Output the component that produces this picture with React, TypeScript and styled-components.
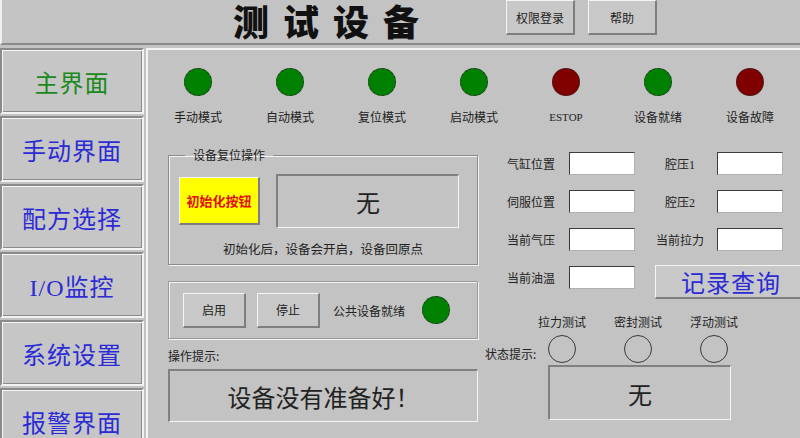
import React from "react";
import styled, { createGlobalStyle, css } from "styled-components";

const GlobalStyle = createGlobalStyle`
  html, body {
    margin: 0;
    padding: 0;
    background: #c3c3c3;
    overflow: hidden;
  }
  body {
    font-family: "Noto Sans CJK SC", "Liberation Sans", sans-serif;
    color: #222;
  }
`;

const raised = css`
  border-style: solid;
  border-width: 1px 2px 2px 1px;
  border-color: #f4f4f4 #7e7e7e #7e7e7e #f4f4f4;
`;

const sunken = css`
  border-style: solid;
  border-width: 2px 1px 1px 2px;
  border-color: #808080 #f4f4f4 #f4f4f4 #808080;
`;

const indicators = [
  { label: "手动模式", color: "green" },
  { label: "自动模式", color: "green" },
  { label: "复位模式", color: "green" },
  { label: "启动模式", color: "green" },
  { label: "ESTOP", color: "red" },
  { label: "设备就绪", color: "green" },
  { label: "设备故障", color: "red" },
];

const navItems = ["主界面", "手动界面", "配方选择", "I/O监控", "系统设置", "报警界面"];

const fields = [
  ["气缸位置", "腔压1"],
  ["伺服位置", "腔压2"],
  ["当前气压", "当前拉力"],
];

const tests = ["拉力测试", "密封测试", "浮动测试"];

const App = () => {
  return (
    <Screen>
      <GlobalStyle />
      <Header>
        <Title>测试设备</Title>
        <HeaderButton>权限登录</HeaderButton>
        <HeaderButton>帮助</HeaderButton>
      </Header>
      <Body>
        <Nav>
          {navItems.map((item, i) => (
            <NavButton key={item} $active={i === 0}>
              {item}
            </NavButton>
          ))}
        </Nav>
        <MainPanel>
          <IndicatorRow>
            {indicators.map((item) => (
              <Indicator key={item.label}>
                <Lamp $color={item.color} />
                <SmallLabel $latin={item.label === "ESTOP"}>{item.label}</SmallLabel>
              </Indicator>
            ))}
          </IndicatorRow>
          <Content>
            <LeftColumn>
              <GroupBox>
                <Legend>设备复位操作</Legend>
                <ResetRow>
                  <InitButton>初始化按钮</InitButton>
                  <ValueBox $w={183} $h={54}>无</ValueBox>
                </ResetRow>
                <Caption>初始化后，设备会开启，设备回原点</Caption>
              </GroupBox>
              <ControlBox>
                <PlainButton>启用</PlainButton>
                <PlainButton>停止</PlainButton>
                <ControlLabel>公共设备就绪</ControlLabel>
                <Lamp $color="green" />
              </ControlBox>
              <HintLabel>操作提示:</HintLabel>
              <ValueBox $w={310} $h={53}>设备没有准备好！</ValueBox>
            </LeftColumn>
            <RightColumn>
              <FieldGrid>
                {fields.map(([a, b]) => (
                  <React.Fragment key={a}>
                    <FieldLabel>{a}</FieldLabel>
                    <FieldInput />
                    <FieldLabel $center>{b}</FieldLabel>
                    <FieldInput />
                  </React.Fragment>
                ))}
                <FieldLabel>当前油温</FieldLabel>
                <FieldInput />
                <RecordButton>记录查询</RecordButton>
              </FieldGrid>
              <TestGrid>
                <span />
                {tests.map((t) => (
                  <SmallLabel key={t}>{t}</SmallLabel>
                ))}
                <StatusLabel>状态提示:</StatusLabel>
                {tests.map((t) => (
                  <EmptyLamp key={t} />
                ))}
              </TestGrid>
              <StatusBox $w={183} $h={55}>无</StatusBox>
            </RightColumn>
          </Content>
        </MainPanel>
      </Body>
    </Screen>
  );
};

export default App;

const Screen = styled.div`
  width: 800px;
  height: 438px;
  overflow: hidden;
  background: #c3c3c3;
`;

const Header = styled.div`
  height: 43px;
  display: flex;
  align-items: flex-start;
  border-left: 2px solid #f0f0f0;
  border-bottom: 2px solid #8a8a8a;
  box-sizing: content-box;
`;

const Title = styled.div`
  margin-left: 231px;
  margin-right: 73px;
  margin-top: 1px;
  font-size: 36px;
  line-height: 38px;
  font-weight: 900;
  letter-spacing: 14px;
  color: #111;
  white-space: nowrap;
`;

const HeaderButton = styled.div`
  ${raised};
  width: 66px;
  height: 32px;
  margin-right: 13px;
  background: #c8c8c8;
  display: flex;
  align-items: center;
  justify-content: center;
  font-size: 12px;
  color: #222;
`;

const Body = styled.div`
  margin-top: 3px;
  display: grid;
  grid-template-columns: 144px 1fr;
  column-gap: 2px;
  height: 390px;
`;

const Nav = styled.div`
  display: flex;
  flex-direction: column;
  gap: 2px;
`;

const NavButton = styled.div<{ $active?: boolean }>`
  flex: 0 0 auto;
  height: 62px;
  border: 2px solid;
  border-color: #8a8a8a #f2f2f2 #f2f2f2 #8a8a8a;
  box-shadow: inset 1px 1px 0 #f6f6f6, inset -1px -1px 0 #8a8a8a;
  background: #c6c6c6;
  display: flex;
  align-items: center;
  justify-content: center;
  font-family: "Liberation Serif", "Noto Sans CJK SC", serif;
  font-size: 24px;
  letter-spacing: 1px;
  color: ${(p) => (p.$active ? "#1b8a1b" : "#2b2bd6")};
`;

const MainPanel = styled.div`
  border-left: 2px solid #f4f4f4;
  border-top: 2px solid #f4f4f4;
  padding-top: 18px;
`;

const IndicatorRow = styled.div`
  display: grid;
  grid-template-columns: repeat(7, 92px);
  padding-left: 4px;
`;

const Indicator = styled.div`
  display: flex;
  flex-direction: column;
  align-items: center;
  gap: 14px;
`;

const Lamp = styled.div<{ $color: string }>`
  width: 28px;
  height: 28px;
  border-radius: 50%;
  box-sizing: border-box;
  border: 1px dashed #2a2a2a;
  background: ${(p) => (p.$color === "red" ? "#800000" : "#008000")};
  flex: 0 0 auto;
`;

const EmptyLamp = styled.div`
  width: 28px;
  height: 28px;
  border-radius: 50%;
  box-sizing: border-box;
  border: 1px solid #3a3a3a;
`;

const SmallLabel = styled.div<{ $latin?: boolean }>`
  font-size: ${(p) => (p.$latin ? "11px" : "12px")};
  line-height: 14px;
  color: #222;
  white-space: nowrap;
  font-family: ${(p) =>
    p.$latin ? `"Liberation Serif", serif` : `"Noto Sans CJK SC", sans-serif`};
`;

const Content = styled.div`
  display: grid;
  grid-template-columns: 310px 1fr;
  column-gap: 7px;
  padding-left: 20px;
  margin-top: 24px;
`;

const LeftColumn = styled.div`
  display: flex;
  flex-direction: column;
`;

const GroupBox = styled.fieldset`
  margin: 0;
  padding: 0;
  height: 117px;
  box-sizing: border-box;
  border: 1px solid #8c8c8c;
  box-shadow: inset 1px 1px 0 #f4f4f4, 1px 1px 0 #f4f4f4;
  display: flex;
  flex-direction: column;
  align-items: center;
`;

const Legend = styled.legend`
  margin-left: 16px;
  padding: 0 8px;
  font-size: 12px;
  line-height: 14px;
  color: #222;
`;

const ResetRow = styled.div`
  align-self: stretch;
  display: flex;
  align-items: center;
  gap: 16px;
  padding-left: 10px;
  margin-top: 12px;
`;

const InitButton = styled.div`
  ${raised};
  width: 78px;
  height: 45px;
  background: #ffff00;
  display: flex;
  align-items: center;
  justify-content: center;
  font-size: 13px;
  font-weight: 700;
  color: #e01010;
`;

const ValueBox = styled.div<{ $w: number; $h: number }>`
  ${sunken};
  box-sizing: border-box;
  width: ${(p) => p.$w}px;
  height: ${(p) => p.$h}px;
  display: flex;
  align-items: center;
  justify-content: center;
  font-size: 24px;
  color: #222;
  background: #c3c3c3;
`;

const Caption = styled.div`
  margin-top: 11px;
  font-size: 12.5px;
  color: #222;
`;

const ControlBox = styled.div`
  margin-top: 16px;
  height: 56px;
  border: 1px solid #9a9a9a;
  box-shadow: inset 1px 1px 0 #f4f4f4, 1px 1px 0 #f4f4f4;
  display: flex;
  align-items: center;
  padding-left: 14px;
`;

const PlainButton = styled.div`
  ${raised};
  width: 60px;
  height: 32px;
  margin-right: 11px;
  background: #c8c8c8;
  display: flex;
  align-items: center;
  justify-content: center;
  font-size: 12px;
  color: #222;
`;

const ControlLabel = styled.div`
  margin-left: 2px;
  margin-right: 17px;
  font-size: 12px;
  color: #222;
`;

const HintLabel = styled.div`
  margin-top: 10px;
  margin-bottom: 6px;
  font-size: 12px;
  line-height: 14px;
`;

const RightColumn = styled.div`
  display: flex;
  flex-direction: column;
`;

const FieldGrid = styled.div`
  margin-left: 22px;
  margin-top: 4px;
  display: grid;
  grid-template-columns: 62px 66px 82px 66px;
  grid-auto-rows: 23px;
  row-gap: 15px;
  align-items: center;
`;

const FieldLabel = styled.div<{ $center?: boolean }>`
  font-size: 12px;
  color: #222;
  white-space: nowrap;
  font-family: "Liberation Serif", "Noto Sans CJK SC", sans-serif;
  text-align: ${(p) => (p.$center ? "center" : "left")};
  padding-left: ${(p) => (p.$center ? "8px" : "0")};
`;

const FieldInput = styled.div`
  box-sizing: border-box;
  width: 66px;
  height: 23px;
  background: #fff;
  border-style: solid;
  border-width: 1px;
  border-color: #3c3c3c #b0b0b0 #b0b0b0 #3c3c3c;
`;

const RecordButton = styled.div`
  grid-column: 3 / 5;
  ${raised};
  width: 150px;
  height: 31px;
  margin-left: 20px;
  margin-top: 8px;
  background: #c8c8c8;
  display: flex;
  align-items: center;
  justify-content: center;
  font-size: 24px;
  letter-spacing: 1px;
  color: #2b2bd6;
`;

const TestGrid = styled.div`
  margin-top: 26px;
  display: grid;
  grid-template-columns: 39px repeat(3, 76px);
  justify-items: center;
  row-gap: 6px;
`;

const StatusLabel = styled.div`
  justify-self: start;
  align-self: center;
  margin-top: 8px;
  font-size: 12px;
  white-space: nowrap;
`;

const StatusBox = styled(ValueBox)`
  margin-left: 63px;
  margin-top: 2px;
`;
